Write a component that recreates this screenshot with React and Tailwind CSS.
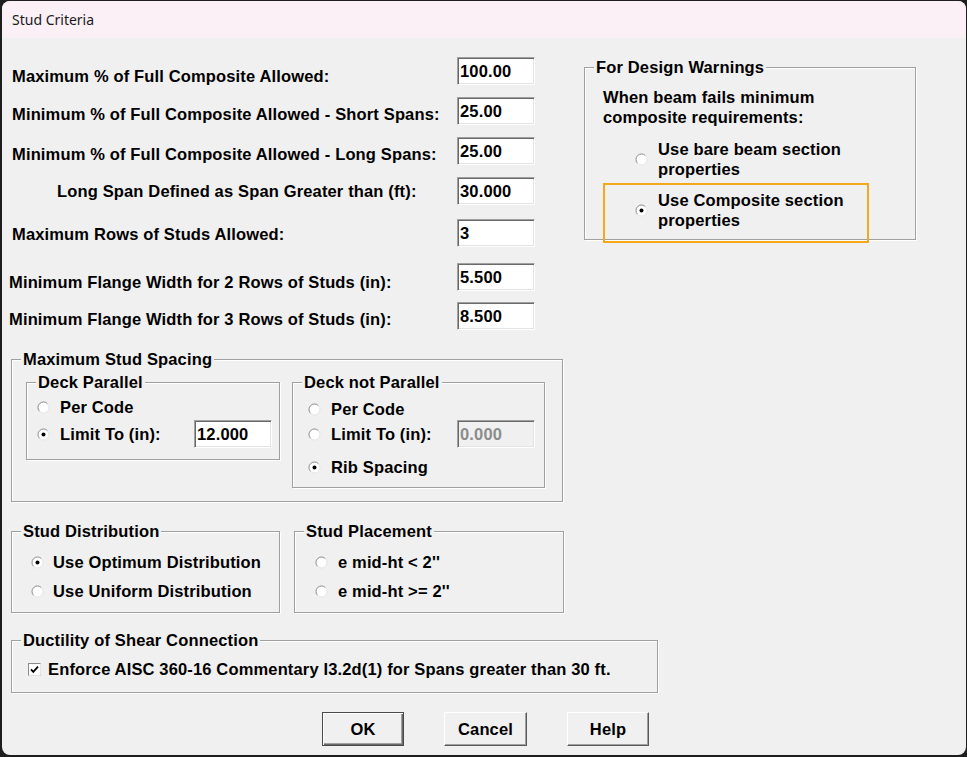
import React from "react";

function Radio({ checked }) {
  return (
    <svg width="13" height="13" viewBox="0 0 13 13" className="shrink-0">
      <circle cx="6.5" cy="6.5" r="5.5" fill="#ffffff" />
      <path d="M2.6 10.4 A5.5 5.5 0 0 1 10.4 2.6" stroke="#8a8a8a" strokeWidth="1" fill="none" />
      <path d="M10.4 2.6 A5.5 5.5 0 0 1 2.6 10.4" stroke="#e4e4e4" strokeWidth="1" fill="none" />
      {checked && <circle cx="6.5" cy="6.5" r="2" fill="#000000" />}
    </svg>
  );
}

function Check() {
  return (
    <svg width="13" height="13" viewBox="0 0 13 13" className="shrink-0">
      <rect x="0.5" y="0.5" width="12" height="12" fill="#ffffff" stroke="#8a8a8a" />
      <path d="M0.5 12.5 H12.5 V0.5" stroke="#e4e4e4" fill="none" />
      <path d="M3 6.3 L5.3 8.8 L10 3.6" stroke="#000000" strokeWidth="1.8" fill="none" />
    </svg>
  );
}

function TextBox({ value, disabled, className = "" }) {
  return (
    <div
      className={`${
        disabled ? "bg-[#f0f0f0] text-[#8c8c8c]" : "bg-white text-black"
      } h-[28px] w-[78px] shrink-0 border border-t-[#a0a0a0] border-l-[#a0a0a0] border-b-white border-r-white shadow-[inset_1px_1px_0_#696969,inset_-1px_-1px_0_#e3e3e3] pl-[2px] flex items-center leading-none ${className}`}
    >
      {value}
    </div>
  );
}

function Legend({ children }) {
  return (
    <span className="absolute -top-[11px] left-[9px] px-[2px] leading-[20px] bg-[#f0f0f0] whitespace-nowrap">
      {children}
    </span>
  );
}

const groupCls =
  "relative border border-[#a0a0a0] shadow-[inset_1px_1px_0_#ffffff,1px_1px_0_#ffffff]";

function Button({ children, def }) {
  return (
    <div
      className={`${
        def
          ? "w-[82px] border border-[#4a4a4a] shadow-[inset_1px_1px_0_#ffffff,inset_-1px_-1px_0_#696969,inset_-2px_-2px_0_#a0a0a0]"
          : "border border-t-white border-l-white border-b-[#5a5a5a] border-r-[#5a5a5a] shadow-[inset_-1px_-1px_0_#a0a0a0]"
      } h-[34px] bg-[#f0f0f0] flex items-center justify-center`}
    >
      {children}
    </div>
  );
}

export default function App() {
  return (
    <div className="w-[967px] h-[757px] bg-[#1e1e1e] pt-[1px] pl-[2px] overflow-hidden">
      <div className="w-[964px] h-[754px] rounded-[8px] overflow-hidden bg-[#f0f0f0] flex flex-col font-['Liberation_Sans',Arial,sans-serif] font-bold text-[16.5px] tracking-[0.15px] text-black">
        {/* title bar */}
        <div className="h-[37px] shrink-0 bg-[#fbf0f6] flex items-center pl-[10px] font-['Noto_Sans',sans-serif] font-normal text-[14px] tracking-normal text-[#1a1a1a]">
          Stud Criteria
        </div>

        {/* body */}
        <div className="flex flex-col">
          {/* top section */}
          <div className="flex items-start">
            <div className="w-[533px] flex flex-col pt-[19px]">
              <div className="flex h-[28px]">
                <div className="w-[455px] pl-[10px] mt-[9px] leading-[20px] whitespace-nowrap">
                  Maximum % of Full Composite Allowed:
                </div>
                <TextBox value="100.00" />
              </div>
              <div className="flex h-[28px] mt-[12px]">
                <div className="w-[455px] pl-[10px] mt-[7px] leading-[20px] whitespace-nowrap">
                  Minimum % of Full Composite Allowed - Short Spans:
                </div>
                <TextBox value="25.00" />
              </div>
              <div className="flex h-[28px] mt-[12px]">
                <div className="w-[455px] pl-[10px] mt-[7px] leading-[20px] whitespace-nowrap">
                  Minimum % of Full Composite Allowed - Long Spans:
                </div>
                <TextBox value="25.00" />
              </div>
              <div className="flex h-[28px] mt-[12px]">
                <div className="w-[455px] pl-[55px] mt-[4px] leading-[20px] whitespace-nowrap">
                  Long Span Defined as Span Greater than (ft):
                </div>
                <TextBox value="30.000" />
              </div>
              <div className="flex h-[28px] mt-[14px]">
                <div className="w-[455px] pl-[10px] mt-[5px] leading-[20px] whitespace-nowrap">
                  Maximum Rows of Studs Allowed:
                </div>
                <TextBox value="3" />
              </div>
              <div className="flex h-[28px] mt-[16px]">
                <div className="w-[455px] pl-[7px] mt-[9px] leading-[20px] whitespace-nowrap">
                  Minimum Flange Width for 2 Rows of Studs (in):
                </div>
                <TextBox value="5.500" />
              </div>
              <div className="flex h-[28px] mt-[11px]">
                <div className="w-[455px] pl-[7px] mt-[7px] leading-[20px] whitespace-nowrap">
                  Minimum Flange Width for 3 Rows of Studs (in):
                </div>
                <TextBox value="8.500" />
              </div>
            </div>

            {/* For Design Warnings */}
            <div className={`${groupCls} ml-[49px] mt-[29px] w-[332px] h-[173px]`}>
              <Legend>For Design Warnings</Legend>
              <div className="ml-[18px] mt-[19px] leading-[20px]">
                <div>When beam fails minimum</div>
                <div>composite requirements:</div>
              </div>
              <div className="ml-[50px] mt-[12px] flex items-center gap-[10px] leading-[20px]">
                <Radio />
                <div>
                  <div>Use bare beam section</div>
                  <div>properties</div>
                </div>
              </div>
              <div className="ml-[18px] mt-[4px] w-[266px] h-[60px] border-2 border-[#f5a81c] pl-[30px] pt-[5px]">
                <div className="h-[40px] flex items-center gap-[10px] leading-[20px]">
                  <Radio checked />
                  <div>
                    <div>Use Composite section</div>
                    <div>properties</div>
                  </div>
                </div>
              </div>
            </div>
          </div>

          {/* Maximum Stud Spacing */}
          <div className={`${groupCls} mt-[29px] ml-[9px] w-[552px] h-[143px] flex items-start`}>
            <Legend>Maximum Stud Spacing</Legend>
            <div className={`${groupCls} ml-[14px] mt-[22px] w-[254px] h-[78px]`}>
              <Legend>Deck Parallel</Legend>
              <div className="mt-[14px] ml-[10px] h-[20px] flex items-center gap-[10px] leading-[20px]">
                <Radio />
                <span>Per Code</span>
              </div>
              <div className="mt-[3px] ml-[10px] h-[28px] flex items-center gap-[10px] leading-[20px]">
                <Radio checked />
                <span>Limit To (in):</span>
                <TextBox value="12.000" className="ml-auto mr-[7px]" />
              </div>
            </div>
            <div className={`${groupCls} ml-[12px] mt-[22px] w-[253px] h-[106px]`}>
              <Legend>Deck not Parallel</Legend>
              <div className="mt-[16px] ml-[15px] h-[20px] flex items-center gap-[10px] leading-[20px]">
                <Radio />
                <span>Per Code</span>
              </div>
              <div className="mt-[1px] ml-[15px] h-[28px] flex items-center gap-[10px] leading-[20px]">
                <Radio />
                <span>Limit To (in):</span>
                <TextBox value="0.000" disabled className="ml-auto mr-[9px]" />
              </div>
              <div className="mt-[9px] ml-[15px] h-[20px] flex items-center gap-[10px] leading-[20px]">
                <Radio checked />
                <span>Rib Spacing</span>
              </div>
            </div>
          </div>

          {/* Distribution / Placement */}
          <div className="flex items-start mt-[29px]">
            <div className={`${groupCls} ml-[9px] w-[269px] h-[82px]`}>
              <Legend>Stud Distribution</Legend>
              <div className="mt-[20px] ml-[19px] h-[20px] flex items-center gap-[9px] leading-[20px]">
                <Radio checked />
                <span>Use Optimum Distribution</span>
              </div>
              <div className="mt-[9px] ml-[19px] h-[20px] flex items-center gap-[9px] leading-[20px]">
                <Radio />
                <span>Use Uniform Distribution</span>
              </div>
            </div>
            <div className={`${groupCls} ml-[14px] w-[270px] h-[82px]`}>
              <Legend>Stud Placement</Legend>
              <div className="mt-[20px] ml-[20px] h-[20px] flex items-center gap-[10px] leading-[20px]">
                <Radio />
                <span>e mid-ht &lt; 2''</span>
              </div>
              <div className="mt-[9px] ml-[20px] h-[20px] flex items-center gap-[10px] leading-[20px]">
                <Radio />
                <span>e mid-ht &gt;= 2''</span>
              </div>
            </div>
          </div>

          {/* Ductility */}
          <div className={`${groupCls} mt-[27px] ml-[9px] w-[647px] h-[53px]`}>
            <Legend>Ductility of Shear Connection</Legend>
            <div className="mt-[18px] ml-[16px] h-[20px] flex items-center gap-[7px] leading-[20px]">
              <Check />
              <span>Enforce AISC 360-16 Commentary I3.2d(1) for Spans greater than 30 ft.</span>
            </div>
          </div>

          {/* Buttons */}
          <div className="flex mt-[19px] ml-[320px] gap-[40px]">
            <Button def>OK</Button>
            <div className="w-[83px]">
              <Button>Cancel</Button>
            </div>
            <div className="w-[82px]">
              <Button>Help</Button>
            </div>
          </div>
        </div>
      </div>
    </div>
  );
}
